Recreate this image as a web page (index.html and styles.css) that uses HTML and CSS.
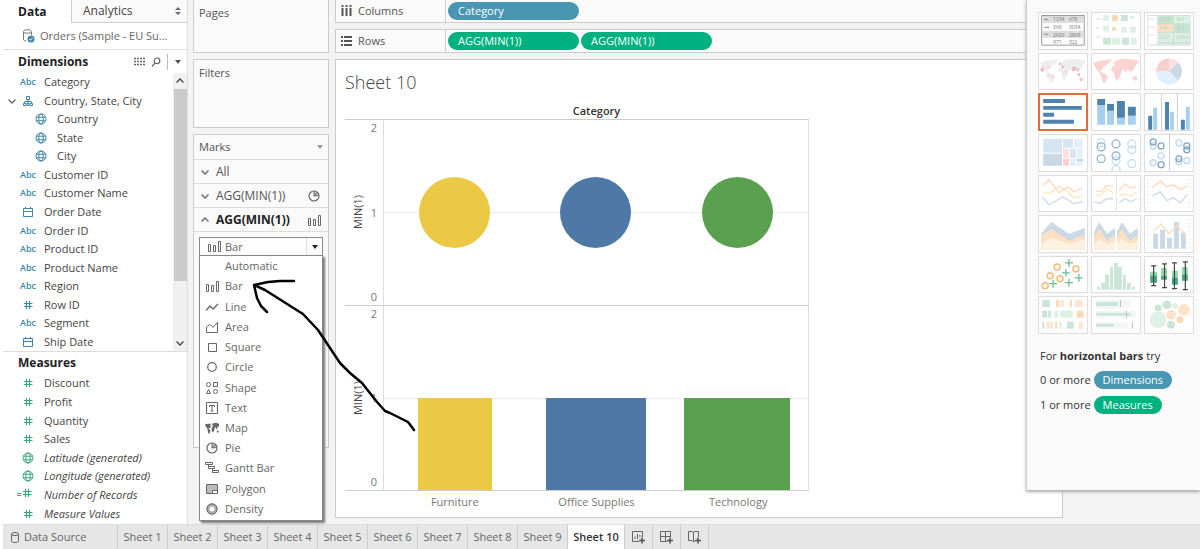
FILE: index.html
```html
<!DOCTYPE html>
<html lang="en">
<head>
  <meta charset="UTF-8">
  <title>Sheet 10</title>
  <meta name="viewport" content="width=device-width, initial-scale=1.0">
  <link rel="stylesheet" href="styles.css">
</head>
<body>

<!-- shared icons -->
<svg class="defs" width="0" height="0" aria-hidden="true">
  <symbol id="i-globe" viewBox="0 0 12 12"><g fill="none" stroke="currentColor"><circle cx="6" cy="6" r="5"/><ellipse cx="6" cy="6" rx="2.2" ry="5"/><path d="M1.4 4.2h9.2M1.4 7.8h9.2"/></g></symbol>
  <symbol id="i-date" viewBox="0 0 12 12"><path d="M1.5 2.5h9v8h-9zM1.5 5.5h9M3.5 1v2M8.5 1v2" fill="none" stroke="currentColor"/></symbol>
  <symbol id="i-hash" viewBox="0 0 12 12"><path d="M4.5 2v8M7.5 2v8M2 4.5h8.5M2 7.5h8.5" fill="none" stroke="currentColor" stroke-width="1.2"/></symbol>
  <symbol id="i-tree" viewBox="0 0 12 12"><path d="M4.5 1.5h3v3h-3zM1.5 8.5H4v2H1.500zM8 8.500h2.500v2H8zM2.700 8.500v-2h6.600v2M5 8.500h2v2H5zM6 4.500v4" fill="none" stroke="currentColor"/></symbol>
  <symbol id="i-down" viewBox="0 0 10 10"><path d="M1.5 3.5L5 7l3.5-3.5" fill="none" stroke="currentColor" stroke-width="1.3"/></symbol>
  <symbol id="i-up" viewBox="0 0 10 10"><path d="M1.5 6.5L5 3l3.5 3.5" fill="none" stroke="currentColor" stroke-width="1.3"/></symbol>
  <symbol id="i-caret" viewBox="0 0 8 8"><path d="M1 2h6L4 6z" fill="currentColor"/></symbol>
  <symbol id="i-bar" viewBox="0 0 14 14"><path d="M1.5 5.5h2v7h-2zM6.5 6.5h2v6h-2zM11.5 2.500h2v10h-2z" fill="none" stroke="currentColor"/></symbol>
  <symbol id="i-line" viewBox="0 0 14 14"><path d="M1 10.500L5 6l3 3 5-5" fill="none" stroke="currentColor" stroke-width="1.3"/></symbol>
  <symbol id="i-area" viewBox="0 0 14 14"><path d="M1.500 12.500V7L5 4.500l3 3L12.500 2.500v10z" fill="none" stroke="currentColor"/></symbol>
  <symbol id="i-square" viewBox="0 0 14 14"><path d="M3.500 3.500h8v8h-8z" fill="none" stroke="currentColor"/></symbol>
  <symbol id="i-circle" viewBox="0 0 14 14"><circle cx="7" cy="7" r="4.300" fill="none" stroke="currentColor" stroke-width="1.200"/></symbol>
  <symbol id="i-shape" viewBox="0 0 14 14"><g fill="none" stroke="currentColor"><circle cx="3.500" cy="3.500" r="2"/><path d="M8.500 1.500h4v4h-4zM3.500 8.500l-2 4h4z"/><circle cx="10.500" cy="10.500" r="2"/></g></symbol>
  <symbol id="i-text" viewBox="0 0 14 14"><path d="M1.500 1.500h11v11h-11zM4.500 6V4.500h5V6M7 4.500V10M5.500 10h3" fill="none" stroke="currentColor"/></symbol>
  <symbol id="i-map" viewBox="0 0 16 14"><path d="M0 3l3-1 4 0-1 2 1 2-2 1-1 1 2 1 0 2-1.500 3-1-2-.500-3L2 6 .500 5zM8 2l4-1 4 1v3l-2 1 0 2-1 0-1-2-1 0 0 3-2 3-1-1-.500-3L7.500 7 9 5zM13.500 10h2v2h-2z" fill="currentColor"/></symbol>
  <symbol id="i-pie" viewBox="0 0 14 14"><circle cx="7" cy="7" r="5" fill="none" stroke="currentColor" stroke-width="1.200"/><path d="M7 7V2A5 5 0 0 1 11.500 5z" fill="currentColor" opacity=".4"/><path d="M7 2v5l4-3.500M7 7l4.500-.500" fill="none" stroke="currentColor"/></symbol>
  <symbol id="i-gantt" viewBox="0 0 14 14"><path d="M.500 1.500h7v2h-7zM3.500 5.500h6v2h-6zM7.500 9.500h6v2h-6zM3.500 3.500v2M7.500 7.500v2" fill="none" stroke="currentColor"/></symbol>
  <symbol id="i-polygon" viewBox="0 0 14 14"><path d="M1.500 2.500h11v9h-11z" fill="#bbb" stroke="currentColor"/><path d="M7.500 11.500v-3h5v3z" fill="#fff" stroke="currentColor"/></symbol>
  <symbol id="i-density" viewBox="0 0 14 14"><circle cx="7" cy="7" r="4" fill="none" stroke="#aaa" stroke-width="3"/><circle cx="7" cy="7" r="5.200" fill="none" stroke="currentColor"/></symbol>
  <symbol id="i-world" viewBox="0 0 48 26"><path d="M1 4l5-2 8-1 6-1-3 4-2 2-3 1-1 3-3 2 2 2 3 1 3 3-2 4-2 3-2-4-2-6-4-5-2-4zM21 4l4-3 6-1 6 0 6 1 4 1-1 3-2 1-1 3-3 3-1 2-2-3-2 0-1 3-2-3-2 0-2 7-3 4-2-3-1-5-3-2 1-4 3-1zM40 19l3-2 3 2-1 3-4-1z" fill="currentColor"/></symbol>
</svg>

<div class="app">
  <div class="workspace">

    <aside class="data-pane">
      <div class="pane-tabs">
        <button class="pane-tab active">Data</button>
        <button class="pane-tab">Analytics
          <svg width="6" height="8" viewBox="0 0 6 8"><path d="M0 3l3-3 3 3zM0 5l3 3 3-3z" fill="#667"/></svg>
        </button>
      </div>
      <div class="source">
        <svg width="13" height="14" viewBox="0 0 13 14"><path d="M1.500 3v7.500c0 1 1.500 1.500 3 1.500M9.500 3v3" fill="none" stroke="#777"/><ellipse cx="5.500" cy="2.500" rx="4" ry="1.800" fill="none" stroke="#777"/><circle cx="9" cy="10" r="3.500" fill="#3d87a8"/><path d="M7.300 10l1.200 1.300 2.200-2.500" fill="none" stroke="#fff"/></svg>
        <span>Orders (Sample - EU Su...</span>
      </div>
      <div class="pane-head">
        <h2>Dimensions</h2>
        <svg class="push" width="11" height="10" viewBox="0 0 11 10"><path d="M0 1.500h11M0 4.500h11M0 7.500h11" stroke="#666" stroke-width="1.500" stroke-dasharray="2 1"/></svg>
        <svg width="10" height="10" viewBox="0 0 10 10"><circle cx="6" cy="3.800" r="2.800" fill="none" stroke="#666" stroke-width="1.200"/><path d="M4 6L1 9.500" stroke="#666" stroke-width="1.200"/></svg>
        <span class="sep"></span>
        <svg class="ico8 dark"><use href="#i-caret"/></svg>
      </div>
      <div class="dim-wrap">
        <ul class="fields dims">
          <li><i>Abc</i>Category</li>
          <li class="group"><svg class="ico10 twist"><use href="#i-down"/></svg><i><svg class="ico12"><use href="#i-tree"/></svg></i>Country, State, City</li>
          <li class="child"><i><svg class="ico12"><use href="#i-globe"/></svg></i>Country</li>
          <li class="child"><i><svg class="ico12"><use href="#i-globe"/></svg></i>State</li>
          <li class="child"><i><svg class="ico12"><use href="#i-globe"/></svg></i>City</li>
          <li><i>Abc</i>Customer ID</li>
          <li><i>Abc</i>Customer Name</li>
          <li><i><svg class="ico12"><use href="#i-date"/></svg></i>Order Date</li>
          <li><i>Abc</i>Order ID</li>
          <li><i>Abc</i>Product ID</li>
          <li><i>Abc</i>Product Name</li>
          <li><i>Abc</i>Region</li>
          <li><i><svg class="ico12"><use href="#i-hash"/></svg></i>Row ID</li>
          <li><i>Abc</i>Segment</li>
          <li><i><svg class="ico12"><use href="#i-date"/></svg></i>Ship Date</li>
        </ul>
        <div class="scrollbar">
          <svg class="ico10"><use href="#i-up"/></svg>
          <span class="thumb"></span>
          <svg class="ico10"><use href="#i-down"/></svg>
        </div>
      </div>
      <div class="pane-head measures-head"><h2>Measures</h2></div>
      <ul class="fields measures">
        <li><i><svg class="ico12"><use href="#i-hash"/></svg></i>Discount</li>
        <li><i><svg class="ico12"><use href="#i-hash"/></svg></i>Profit</li>
        <li><i><svg class="ico12"><use href="#i-hash"/></svg></i>Quantity</li>
        <li><i><svg class="ico12"><use href="#i-hash"/></svg></i>Sales</li>
        <li class="gen"><i><svg class="ico12"><use href="#i-globe"/></svg></i>Latitude (generated)</li>
        <li class="gen"><i><svg class="ico12"><use href="#i-globe"/></svg></i>Longitude (generated)</li>
        <li class="gen"><i class="calc"><svg class="ico12"><use href="#i-hash"/></svg></i>Number of Records</li>
        <li class="gen"><i><svg class="ico12"><use href="#i-hash"/></svg></i>Measure Values</li>
      </ul>
    </aside>

    <section class="cards">
      <div class="card pages">Pages</div>
      <div class="card filters">Filters</div>
      <div class="card marks">
        <div class="marks-title">Marks <svg class="ico8"><use href="#i-caret"/></svg></div>
        <button class="marks-row"><svg class="ico10"><use href="#i-down"/></svg>All</button>
        <button class="marks-row"><svg class="ico10"><use href="#i-down"/></svg>AGG(MIN(1))<svg class="ico14 end"><use href="#i-pie"/></svg></button>
        <button class="marks-row open"><svg class="ico10"><use href="#i-up"/></svg>AGG(MIN(1))<svg class="ico14 end"><use href="#i-bar"/></svg></button>
        <div class="mark-type">
          <select class="mark-select" aria-label="Mark type"><option>Bar</option></select>
          <svg class="ico14 select-icon"><use href="#i-bar"/></svg>
          <span class="select-arrow"><svg class="ico8"><use href="#i-caret"/></svg></span>
          <div class="mark-menu">
            <button><span></span>Automatic</button>
            <button><svg class="ico14"><use href="#i-bar"/></svg>Bar</button>
            <button><svg class="ico14"><use href="#i-line"/></svg>Line</button>
            <button><svg class="ico14"><use href="#i-area"/></svg>Area</button>
            <button><svg class="ico14"><use href="#i-square"/></svg>Square</button>
            <button><svg class="ico14"><use href="#i-circle"/></svg>Circle</button>
            <button><svg class="ico14"><use href="#i-shape"/></svg>Shape</button>
            <button><svg class="ico14"><use href="#i-text"/></svg>Text</button>
            <button><svg class="ico14"><use href="#i-map"/></svg>Map</button>
            <button><svg class="ico14"><use href="#i-pie"/></svg>Pie</button>
            <button><svg class="ico14"><use href="#i-gantt"/></svg>Gantt Bar</button>
            <button><svg class="ico14"><use href="#i-polygon"/></svg>Polygon</button>
            <button><svg class="ico14"><use href="#i-density"/></svg>Density</button>
          </div>
        </div>
      </div>
    </section>

    <main class="sheet">
      <div class="shelf first">
        <div class="shelf-name"><svg width="11" height="12" viewBox="0 0 11 12"><path d="M1.500 0v2M5.500 0v2M9.500 0v2M1.500 3v8M5.500 3v8M9.500 3v8" stroke="#555" stroke-width="2"/></svg>Columns</div>
        <span class="pill blue">Category</span>
      </div>
      <div class="shelf">
        <div class="shelf-name"><svg width="11" height="12" viewBox="0 0 11 12"><path d="M0 2h2M0 6h2M0 10h2M3 2h8M3 6h8M3 10h8" stroke="#555" stroke-width="2"/></svg>Rows</div>
        <span class="pill green">AGG(MIN(1))</span>
        <span class="pill green">AGG(MIN(1))</span>
      </div>
      <div class="view">
        <h1>Sheet 10</h1>
        <div class="chart">
          <div class="chart-head">Category</div>
          <div class="axis"><span class="axis-title">MIN(1)</span><div class="ticks"><span>2</span><span>1</span><span>0</span></div></div>
          <div class="plot">
            <div class="cell"><span class="dot yellow"></span></div>
            <div class="cell"><span class="dot navy"></span></div>
            <div class="cell"><span class="dot leaf"></span></div>
          </div>
          <div class="axis"><span class="axis-title">MIN(1)</span><div class="ticks"><span>2</span><span>1</span><span>0</span></div></div>
          <div class="plot bars">
            <div class="cell"><span class="bar yellow" style="width:74px"></span></div>
            <div class="cell"><span class="bar navy" style="width:100px"></span></div>
            <div class="cell"><span class="bar leaf" style="width:106px"></span></div>
          </div>
          <div class="labels"><span>Furniture</span><span>Office Supplies</span><span>Technology</span></div>
        </div>
      </div>
    </main>

    <aside class="show-me">
      <div class="thumbs">
        <button aria-label="Text table"><svg viewBox="1 1 48 36"><path d="M3.500 3.500h43v30h-43z" fill="#fff" stroke="#999"/><path d="M4 4h42v7H4zM4 19h42v7H4z" fill="#ddd"/><path d="M6 7.500h4M6 15.500h5M6 22.500h4" stroke="#888"/><g font-size="5" fill="#777"><text x="15" y="9">1234</text><text x="31" y="9">678</text><text x="15" y="17">368</text><text x="31" y="17">3034</text><text x="15" y="25">2620</text><text x="31" y="25">2869</text><text x="15" y="32">971</text><text x="31" y="32">322</text></g></svg></button>
        <button aria-label="Heat map"><svg viewBox="1 1 48 36"><path d="M5 7h5M5 16h4M5 25h4" stroke="#ddd"/><path d="M12 3h6v6h-6zM39 4h4v3h-4zM12 14h6v6h-6zM30 15h6v6h-6zM39 15h6v6h-6zM21 26h8v7h-8zM40 26h6v7h-6z" fill="#dff1e6"/><path d="M30 3h7v6h-7zM12 26h8v7h-8zM31 26h7v7h-7z" fill="#cbe6d8"/><path d="M21 3h6v6h-6zM21 15h4v4h-4z" fill="#fbd9b8"/></svg></button>
        <button aria-label="Highlight table"><svg viewBox="1 1 48 36"><path d="M3.500 3.500h43v30h-43z" fill="#fff" stroke="#ddd"/><path d="M13 4h16v8H13zM30 12h16v9H30z" fill="#c6e4d4"/><path d="M30 4h16v8H30zM13 21h33v8H13z" fill="#dcf1e5"/><path d="M13 12h16v9H13z" fill="#fde0c4"/><path d="M13 30h33v3H13z" fill="#cde8da"/><path d="M5 7.500h5M5 15.500h6M5 23.500h4" stroke="#ddd"/><path d="M13 12h33M13 21h33M13 29.500h33M29.500 4v29" stroke="#bdd8ca" stroke-width=".7"/><g font-size="5" fill="#b4cfc1"><text x="15" y="9">1234</text><text x="32" y="9">561</text><text x="15" y="18">368</text><text x="32" y="18">303</text><text x="15" y="27">2620</text><text x="32" y="27">(2869)</text></g></svg></button>
        <button aria-label="Symbol map"><svg viewBox="1 1 48 36"><svg x="1" y="6" width="48" height="26" color="#eee"><use href="#i-world"/></svg><g fill="#efb9c0"><circle cx="4" cy="17" r="2"/><circle cx="5" cy="14" r="1"/><circle cx="10" cy="14" r="1.500" fill="#f9d4d4"/><circle cx="22" cy="11" r="1.300"/><circle cx="25" cy="14" r="1.500"/><circle cx="36" cy="16" r="2.300"/><circle cx="40" cy="17" r="1.500"/><circle cx="41" cy="22" r="1.500"/><circle cx="28" cy="19" r="1.500" fill="#f9d4d4"/><circle cx="10" cy="23" r="1.500" fill="#f9d4d4"/><circle cx="15" cy="24" r="1.500" fill="#f9d4d4"/><circle cx="43" cy="27" r="1.300"/></g></svg></button>
        <button aria-label="Filled map"><svg viewBox="1 1 48 36"><svg x="1" y="6" width="48" height="26" color="#fbd3d0"><use href="#i-world"/></svg></svg></button>
        <button aria-label="Pie chart"><svg viewBox="1 1 48 36"><path d="M25 18.500V5.500A13 13 0 0 0 12 18.500z" fill="#f8cfce"/><path d="M25 18.500V5.500A13 13 0 0 1 34.200 9.300z" fill="#fde0df"/><path d="M25 18.500L34.200 9.300A13 13 0 0 1 34.200 27.700z" fill="#cbd9e6"/><path d="M25 18.500L34.200 27.700A13 13 0 0 1 12 18.500z" fill="#e0effb"/></svg></button>
        <button aria-label="Horizontal bars" class="selected"><svg viewBox="2 2 46 34"><path d="M5 6h22v4H5zM5 13h39v4H5zM5 20h11v4H5zM5 27h31v4H5z" fill="#4e83ad"/></svg></button>
        <button aria-label="Stacked bars"><svg viewBox="1 1 48 36"><path d="M6 12h8v20H6zM16 18h7v14h-7zM26 25h8v7h-8zM37 23h8v9h-8z" fill="#a6d0ee"/><path d="M6 6h8v6H6zM16 11h7v7h-7zM26 8h8v17h-8zM37 14h8v9h-8z" fill="#4e83ad"/></svg></button>
        <button aria-label="Side-by-side bars"><svg viewBox="1 1 48 36"><path d="M17.500 1v36M33.500 1v36" stroke="#ccc"/><path d="M9 15h4v22H9zM26 19h4v18h-4zM42 14h4v23h-4z" fill="#a6d0ee"/><path d="M4 23h4v14H4zM21 9h4v28h-4zM37 27h4v10h-4z" fill="#4e83ad"/></svg></button>
        <button aria-label="Treemap"><svg viewBox="1 1 48 36"><path d="M5 5h19v14H5zM25 5h10v9H25zM32 15h6v9h-6z" fill="#d6e5f1"/><path d="M5 20h19v12H5zM39 25h6v3h-6z" fill="#cad8e5"/><path d="M36 5h9v9h-9zM39 15h6v9h-6zM32 25h6v7h-6zM39 29h6v3h-6z" fill="#e3f0fb"/><path d="M25 15h6v9h-6z" fill="#fde0df"/><path d="M25 25h6v7h-6z" fill="#f8cfce"/></svg></button>
        <button aria-label="Circle views"><svg viewBox="1 1 48 36"><g fill="none" stroke="#c4def2" stroke-width="1.300"><circle cx="10" cy="9" r="4"/><circle cx="41" cy="16" r="4"/><circle cx="25" cy="27" r="4"/><circle cx="41" cy="30" r="4"/><circle cx="25" cy="36" r="4"/><circle cx="41" cy="10" r="4"/></g><g fill="none" stroke="#8fb1cc" stroke-width="1.300"><circle cx="10" cy="13" r="4"/><circle cx="10" cy="25" r="4"/><circle cx="25" cy="10" r="4"/><circle cx="25" cy="22" r="4"/></g></svg></button>
        <button aria-label="Side-by-side circles"><svg viewBox="1 1 48 36"><path d="M25.500 1v36" stroke="#ccc"/><g fill="none" stroke="#bcdaf0" stroke-width="1.300"><circle cx="9" cy="12" r="3"/><circle cx="17" cy="22" r="3"/><circle cx="9" cy="29" r="3"/><circle cx="35" cy="9" r="3"/><circle cx="35" cy="28" r="3"/><circle cx="43" cy="27" r="3"/></g><g fill="none" stroke="#7fa5c4" stroke-width="1.300"><circle cx="9" cy="8" r="3"/><circle cx="17" cy="12" r="3"/><circle cx="17" cy="31" r="3"/><circle cx="43" cy="12" r="3"/><circle cx="43" cy="16" r="3"/><circle cx="35" cy="25" r="3"/></g></svg></button>
        <button aria-label="Lines continuous"><svg viewBox="1 1 48 36"><g fill="none" stroke-width="1.300"><path d="M5 17l6 2 10-8 6 4 9 8 9-2" stroke="#fde7bd"/><path d="M5 10l6-5 10 13 9-6 6 5 9-4" stroke="#fbd9b8"/><path d="M4 22l7 8 14-8 11 7 9-2" stroke="#cbd9e6"/></g></svg></button>
        <button aria-label="Lines discrete"><svg viewBox="1 1 48 36"><path d="M25.500 1v36" stroke="#e6e6e6"/><g fill="none" stroke-width="1.300"><path d="M4 21l6-1 6-6 6 4M28 21l6-2 6 2 6-4" stroke="#fde7bd"/><path d="M4 16l6 1 5-6 7 0M28 16l6-7 6 4 6-1" stroke="#fbd9b8"/><path d="M3 27l6 2 6-5 7 0M28 28l6-4 6 3 6-3" stroke="#cbd9e6"/></g></svg></button>
        <button aria-label="Dual lines"><svg viewBox="1 1 48 36"><path d="M4.500 4v30M45.500 4v30" stroke="#eee" stroke-width="3" stroke-dasharray="1 3"/><g fill="none" stroke-width="1.300"><path d="M8 13l8-7 7 6 6-2 8 5 6-4" stroke="#fbd9b8"/><path d="M8 21l8-4 7 9 6-3 8 5 6-8" stroke="#cbd9e6"/></g></svg></button>
        <button aria-label="Area continuous"><svg viewBox="1 1 48 36"><path d="M3 19L13 7l18 12 16-6v22H3z" fill="#cbd9e6"/><path d="M3 21l10-7 18 12 16-6v15H3z" fill="#fbe0c4"/><path d="M3 29l10-6 18 6 16-4v10H3z" fill="#fdf1e0"/></svg></button>
        <button aria-label="Area discrete"><svg viewBox="1 1 48 36"><path d="M3 17l5-10 8 12 8-6v22H3zM26 17l5-10 8 12 8-6v22H26z" fill="#cbd9e6"/><path d="M3 22l5-8 8 12 8-6v15H3zM26 22l5-8 8 12 8-6v15H26z" fill="#fbe0c4"/><path d="M3 29l5-5 8 5 8-3v9H3zM26 29l5-5 8 5 8-3v9H26z" fill="#fdf1e0"/></svg></button>
        <button aria-label="Dual combination"><svg viewBox="1 1 48 36"><path d="M4.500 4v30M45.500 4v30" stroke="#eee" stroke-width="3" stroke-dasharray="1 3"/><path d="M9 19h5v15H9zM16 15h5v19h-5zM23 23h5v11h-5zM30 7h5v27h-5zM37 18h5v16h-5z" fill="#cbd9e6"/><path d="M10 16l7-7 8 10 8-8 8 8" fill="none" stroke="#fbd9b8" stroke-width="1.300"/></svg></button>
        <button aria-label="Scatter plot"><svg viewBox="1 1 48 36"><g fill="none" stroke="#f7ba74" stroke-width="1.500"><circle cx="19" cy="11" r="3"/><circle cx="38" cy="13" r="3"/><circle cx="12" cy="20" r="3"/><circle cx="22" cy="23" r="3"/><circle cx="7" cy="30" r="3"/></g><path d="M31 3v8M27 7h8M28 13v8M24 17h8M41 18v8M37 22h8M15 24v8M11 28h8M31 23v8M27 27h8" stroke="#6dbd94" stroke-width="1.300"/></svg></button>
        <button aria-label="Histogram"><svg viewBox="1 1 48 36"><path d="M6 31h3v3H6zM10 27h4v7h-4zM14 19h4v15h-4zM19 11h3v23h-3zM23 7h4v27h-4zM27 11h4v23h-4zM32 19h3v15h-3zM36 27h4v7h-4zM41 31h3v3h-3z" fill="#cbe6d8"/></svg></button>
        <button aria-label="Box-and-whisker plot"><svg viewBox="1 1 48 36"><path d="M6 16h7v5H6zM17 12h6v8h-6zM28 15h6v7h-6zM38 11h6v9h-6z" fill="#93d7ae"/><path d="M6 20h7v7H6zM17 20h6v4h-6zM28 22h6v7h-6zM38 19h6v6h-6z" fill="#45a97d"/><path d="M9.500 10v20M20.500 8v24M30.500 7v26M41.500 6v28M7 10h5M7 30h5M18 8h5M18 32h5M28 7h5M28 33h5M39 6h5M39 34h5" stroke="#444" stroke-width="1.200"/></svg></button>
        <button aria-label="Gantt chart"><svg viewBox="1 1 48 36"><path d="M4 4h8v7H4zM4 15h5v7H4zM10 15h3v7h-3zM4 26h2v7H4zM29 26h7v7h-7z" fill="#cbe6d8"/><path d="M16 15h4v7h-4zM22 15h13v7H22zM21 26h3v7h-3z" fill="#dff1e6"/><path d="M22 4h4v7h-4zM37 4h8v7h-8zM8 26h7v7H8zM41 26h4v7h-4z" fill="#fde6d2"/><path d="M18 4h3v7h-3zM32 4h2v7h-2zM39 15h7v7h-7zM17 26h2v7h-2z" fill="#fbd9b8"/></svg></button>
        <button aria-label="Bullet graph"><svg viewBox="1 1 48 36"><path d="M4 4h36v8H4zM4 15h41v7H4zM4 26h33v7H4z" fill="#f5f7f6"/><path d="M5 6h22v4H5zM5 17h35v3H5zM5 28h18v3H5z" fill="#cbe6d8"/><path d="M29.500 4v7M35.500 15v7M41.500 26v7" stroke="#bbb"/></svg></button>
        <button aria-label="Packed bubbles"><svg viewBox="1 1 48 36"><g fill="#cbe6d8"><circle cx="14" cy="12" r="3.500"/><circle cx="23" cy="9" r="4.500"/><circle cx="27" cy="29" r="4"/></g><g fill="#dff1e6"><circle cx="14" cy="24" r="8.500"/><circle cx="31" cy="10" r="3"/></g><g fill="#fde3cb"><circle cx="40" cy="14" r="6"/><circle cx="27" cy="19" r="5"/></g><circle cx="36" cy="24" r="3.500" fill="#fbd9b8"/></svg></button>
      </div>
      <p>For <b>horizontal bars</b> try</p>
      <p>0 or more <span class="tag blue">Dimensions</span></p>
      <p>1 or more <span class="tag green">Measures</span></p>
    </aside>

    <!-- hand-drawn annotation -->
    <svg class="annotation" width="440" height="440" viewBox="0 0 440 440" aria-hidden="true">
      <path d="M294 281L280 281 268 282 254 285 257 298 261 306 267 312M254 285L265 290 284 302 295 309 303 314 318 330 340 363 350 373 362 383 377 402 385 411 390 413 408 422 414 430"/>
    </svg>
  </div>

  <nav class="sheet-tabs">
    <button class="source-tab"><svg width="8" height="11" viewBox="0 0 8 11"><path d="M.500 2v7c0 2 7 2 7 0V2" fill="none" stroke="#666"/><ellipse cx="4" cy="2" rx="3.500" ry="1.500" fill="none" stroke="#666"/></svg>Data Source</button>
    <button>Sheet 1</button>
    <button>Sheet 2</button>
    <button>Sheet 3</button>
    <button>Sheet 4</button>
    <button>Sheet 5</button>
    <button>Sheet 6</button>
    <button>Sheet 7</button>
    <button>Sheet 8</button>
    <button>Sheet 9</button>
    <button class="active">Sheet 10</button>
    <button class="new" aria-label="New worksheet"><svg width="15" height="14" viewBox="0 0 15 14"><path d="M8 11.500H1.500v-10h10V7M4 9V6.500M6.500 9V4M9 7V5" fill="none" stroke="#666"/><path d="M11 7.500v6M8 10.500h6" stroke="#555" stroke-width="1.600"/></svg></button>
    <button class="new" aria-label="New dashboard"><svg width="15" height="14" viewBox="0 0 15 14"><path d="M8 11.500H1.500v-10h10V7M6.500 1.500v10M1.500 6.500h10" fill="none" stroke="#666"/><path d="M11 7.500v6M8 10.500h6" stroke="#555" stroke-width="1.600"/></svg></button>
    <button class="new" aria-label="New story"><svg width="15" height="14" viewBox="0 0 15 14"><path d="M8 11l-1.500 1L5 10.500H1.500v-9H5l1.500 1 1.500-1h3.500V7M6.500 2.500V12" fill="none" stroke="#666"/><path d="M11 7.500v6M8 10.500h6" stroke="#555" stroke-width="1.600"/></svg></button>
  </nav>
</div>

</body>
</html>
```
FILE: styles.css
```css
* { box-sizing: border-box; }
body {
  margin: 0;
  font-family: "Open Sans", "Noto Sans", sans-serif;
  font-size: 11px;
  line-height: 16px;
  color: #444;
  background: #fff;
}
h1, h2, p, ul { margin: 0; padding: 0; }
ul { list-style: none; }
button {
  font: inherit;
  color: inherit;
  background: none;
  border: 0;
  padding: 0;
  cursor: pointer;
}
svg { flex: none; display: block; }
.defs { position: absolute; }
.ico8 { width: 8px; height: 8px; }
.ico10 { width: 10px; height: 10px; }
.ico12 { width: 12px; height: 12px; }
.ico14 { width: 14px; height: 14px; }

.app { display: flex; flex-direction: column; min-height: 100vh; padding-left: 3px; }
.workspace { flex: 1; display: flex; background: #f3f3f3; }

/* data pane */
.data-pane { width: 185px; flex: none; background: #fff; border-right: 1px solid #ddd; }
.pane-tabs { display: flex; height: 23px; }
.pane-tab { flex: 1; display: flex; justify-content: space-between; align-items: center; padding: 0 6px 0 11px; background: #fafafa; border-left: 1px solid #ccc; border-bottom: 1px solid #ccc; font-size: 12px; }
.pane-tab.active { flex: none; width: 68px; padding-left: 15px; background: #fff; border: 0; font-weight: bold; color: #222; }
.source { display: flex; align-items: center; gap: 5px; height: 27px; padding-left: 19px; border-bottom: 1px solid #ddd; color: #666; white-space: nowrap; }
.pane-head { display: flex; align-items: center; gap: 6px; height: 23px; padding: 0 5px 0 15px; }
.pane-head h2 { font-size: 12px; color: #222; }
.push { margin-left: auto; }
.sep { width: 1px; height: 16px; background: #bbb; }
.dark { color: #555; }
.dim-wrap { display: flex; height: 279px; border-bottom: 1px solid #ddd; }
.fields { display: flex; flex-direction: column; }
.fields li { flex: 1; display: flex; align-items: center; white-space: nowrap; }
.fields i { width: 22px; margin: 0 5px 0 14px; display: flex; justify-content: center; font-style: normal; font-size: 9px; font-weight: 600; color: #3d87a8; }
.dims { flex: 1; }
.fields .group i { margin-left: 0; }
.twist { margin-left: 4px; color: #666; }
.fields .child i { margin-left: 27px; }
.scrollbar { width: 14px; display: flex; flex-direction: column; align-items: center; gap: 3px; padding: 3px 0; background: #f0f0f0; }
.thumb { width: 13px; height: 192px; background: #cbcbcb; }
.scrollbar svg:last-child { margin-top: auto; }
.measures-head { height: 22px; }
.measures { height: 149px; }
.measures i { color: #3aa67a; }
.gen { font-style: italic; }
.calc::before { content: "="; margin-left: -6px; font-size: 8px; }

/* cards */
.cards { width: 147px; flex: none; padding: 0 5px; display: flex; flex-direction: column; gap: 6px; }
.card { width: 136px; background: #fafafa; border: 1px solid #ccc; padding: 5px; color: #555; }
.pages { height: 53px; border-top: 0; }
.filters { height: 69px; }
.marks { height: 314px; padding: 0; }
.marks-title { display: flex; justify-content: space-between; align-items: center; height: 25px; padding: 0 4px 0 5px; border-bottom: 1px solid #ddd; }
.marks-title svg { color: #999; }
.marks-row { display: flex; align-items: center; gap: 6px; width: 100%; height: 24px; padding: 0 7px 0 6px; border-bottom: 1px solid #ddd; font-size: 12px; }
.marks-row.open { font-weight: bold; color: #222; }
.marks-row svg { color: #666; }
.marks-row .end { margin-left: auto; }
.mark-type { position: relative; margin: 5px 5px 0; }
.mark-select { appearance: none; display: block; width: 100%; height: 19px; padding: 0 25px; border: 1px solid #888; border-radius: 0; background: #fdfdfd; font: inherit; color: #666; }
.select-icon { position: absolute; left: 8px; top: 2px; color: #666; }
.select-arrow { position: absolute; right: 1px; top: 1px; width: 16px; height: 17px; padding: 5px 4px; border-left: 1px solid #ddd; color: #222; }
.mark-menu { position: absolute; left: 0; right: 0; top: 18px; z-index: 2; height: 266px; display: flex; flex-direction: column; padding-bottom: 1px; background: #fff; border: 1px solid #888; box-shadow: 2px 2px 2px #777; color: #666; }
.mark-menu button { flex: 1; display: flex; align-items: center; gap: 6px; padding-left: 5px; }
.mark-menu span { width: 14px; }

/* worksheet */
.sheet { flex: 1; min-width: 0; margin-right: 137px; }
.shelf { display: flex; align-items: center; gap: 2px; height: 24px; margin-bottom: 6px; border: 1px solid #ccc; background: #fafafa; }
.shelf.first { height: 23px; border-top: 0; }
.shelf-name { display: flex; align-items: center; gap: 6px; width: 110px; height: 100%; padding-left: 5px; border-right: 1px solid #ccc; color: #555; }
.pill { width: 131px; height: 18px; padding-left: 10px; border-radius: 9px; line-height: 18px; color: #fff; }
.blue { background: #4996b2; }
.green { background: #00b180; }
.view { height: 459px; padding: 8px 9px; background: #fff; border: 1px solid #ccc; }
.view h1 { font-size: 18px; line-height: 28px; font-weight: 300; }
.chart { display: grid; grid-template-columns: 39px 1fr; grid-template-rows: 24px 186px 185px 22px; max-width: 464px; color: #777; }
.chart-head { grid-column: 1 / 3; padding: 7px 0 0 39px; border-bottom: 1px solid #ccc; text-align: center; font-weight: 600; color: #333; }
.axis { display: flex; justify-content: space-between; align-items: center; border-right: 1px solid #ddd; border-bottom: 1px solid #ccc; }
.axis-title { writing-mode: vertical-rl; transform: rotate(180deg); margin-left: 5px; color: #444; }
.ticks { display: flex; flex-direction: column; justify-content: space-between; height: 100%; padding-right: 6px; }
.plot { display: grid; grid-template-columns: 1fr 1fr 1fr; border-right: 1px solid #ddd; border-bottom: 1px solid #ccc; background: linear-gradient(#eee, #eee) center / 100% 1px no-repeat; }
.cell { display: flex; align-items: center; justify-content: center; }
.bars .cell { align-items: flex-end; }
.dot { width: 71px; height: 71px; border-radius: 50%; }
.bar { height: 50%; }
.yellow { background: #ecc944; }
.navy { background: #4e79a7; }
.leaf { background: #59a14f; }
.labels { grid-column: 2; display: grid; grid-template-columns: 1fr 1fr 1fr; padding-top: 3px; text-align: center; }

/* show me */
.show-me { position: absolute; right: 0; top: 0; width: 174px; height: 490px; padding: 12px 6px 0 11px; background: #fafafa; border-left: 1px solid #ccc; box-shadow: 0 2px 3px #aaa; color: #333; }
.thumbs { display: grid; grid-template-columns: repeat(3, 1fr); grid-template-rows: repeat(8, 1fr); gap: 3px; height: 322px; margin-bottom: 14px; }
.thumbs button { display: flex; overflow: hidden; background: #fff; border: 1px solid #ddd; }
.thumbs svg { width: 100%; height: 100%; }
.thumbs svg svg { width: 48px; height: 26px; }
.thumbs .selected { border: 2px solid #e06c36; }
.show-me p { display: flex; align-items: center; gap: 3px; margin-bottom: 7px; padding-left: 2px; }
.tag { padding: 1px 9px; border-radius: 9px; color: #fff; }

.annotation { position: absolute; left: 0; top: 0; z-index: 3; pointer-events: none; }
.annotation path { fill: none; stroke: #000; stroke-width: 2.5; stroke-linecap: round; stroke-linejoin: round; }

/* sheet tabs */
.sheet-tabs { display: flex; height: 25px; background: #e6e6e6; border-top: 1px solid #ddd; color: #666; }
.sheet-tabs button { width: 50px; border-right: 1px solid #ccc; white-space: nowrap; }
.sheet-tabs .source-tab { display: flex; align-items: center; gap: 5px; width: 115px; padding-left: 8px; }
.sheet-tabs .active { width: 57px; background: #fff; font-weight: 600; color: #333; }
.sheet-tabs .new { display: flex; align-items: center; justify-content: center; width: 28px; }
```
